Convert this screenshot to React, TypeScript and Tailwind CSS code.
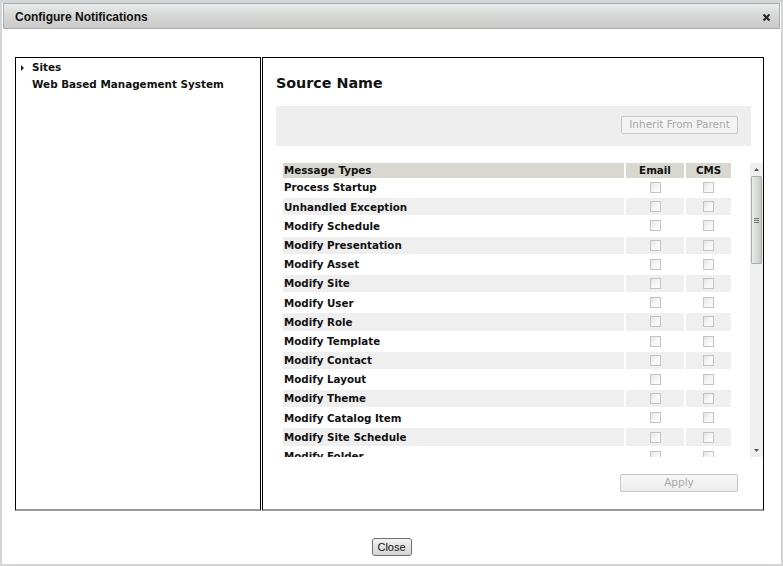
import React from "react";

const rows = [
  "Process Startup",
  "Unhandled Exception",
  "Modify Schedule",
  "Modify Presentation",
  "Modify Asset",
  "Modify Site",
  "Modify User",
  "Modify Role",
  "Modify Template",
  "Modify Contact",
  "Modify Layout",
  "Modify Theme",
  "Modify Catalog Item",
  "Modify Site Schedule",
  "Modify Folder",
];

function Check() {
  return (
    <div className="w-[11px] h-[11px] border border-[#c4c4c4] bg-gradient-to-br from-[#e4e4e4] via-[#f6f6f6] to-[#fbfbfb]" />
  );
}

export default function App() {
  return (
    <div
      className="w-[783px] h-[566px] bg-white border-l-2 border-r-2 border-t-[3px] border-b-2 border-[#d3d6d6] flex flex-col overflow-hidden"
      style={{ fontFamily: '"DejaVu Sans", Verdana, sans-serif' }}
    >
      {/* Title bar */}
      <div className="mx-px h-[26px] shrink-0 border border-[#acacac] bg-gradient-to-b from-[#e7ecea] via-[#d6d7d5] to-[#cacaca] flex items-center justify-between pl-[11px] pr-[8px] pt-[2px]">
        <span
          className="text-[12px] font-bold text-[#111]"
          style={{ fontFamily: '"Liberation Sans", Arial, sans-serif' }}
        >
          Configure Notifications
        </span>
        <svg width="9" height="9" viewBox="0 0 9 9">
          <path d="M1.5 1.5 L7.5 7.5 M7.5 1.5 L1.5 7.5" stroke="#2a2a2a" strokeWidth="2.2" />
        </svg>
      </div>

      {/* Panels */}
      <div className="mt-[28px] ml-[13px] flex gap-px">
        {/* Left panel */}
        <div className="w-[246px] h-[454px] border-t border-l border-r border-black border-b-2 border-b-[#9a9a92] pt-[1px] text-[10.4px] font-bold text-[#111]">
          <div className="flex items-center h-[17px]">
            <svg width="16" height="10" viewBox="0 0 16 10" className="shrink-0">
              <path d="M5 2 L8 5 L5 8 Z" fill="#222" />
            </svg>
            <span>Sites</span>
          </div>
          <div className="flex items-center h-[17px] pl-[16px]">
            <span>Web Based Management System</span>
          </div>
        </div>

        {/* Right panel */}
        <div className="w-[502px] h-[454px] border-t border-l border-r border-black border-b-2 border-b-[#9a9a92] flex flex-col">
          <div className="pl-[13px] pr-[12px] pt-[17px]">
            <div className="h-[18px] flex items-center text-[14.3px] font-bold text-[#111]">
              Source Name
            </div>
            <div className="mt-[13px] h-[40px] bg-[#eeeeee] flex justify-end items-start pt-[10px] pr-[13px]">
              <div className="w-[117px] h-[18px] border border-[#c6c6c6] rounded-[2px] bg-[#f3f3f3] flex items-center justify-center text-[10.5px] text-[#a8a8a8]">
                Inherit From Parent
              </div>
            </div>
          </div>

          {/* Table + scrollbar */}
          <div className="mt-[17px] ml-[18px] h-[294px] flex">
            <div className="flex-1 overflow-hidden">
              <div className="flex flex-col gap-y-[2px] pl-[2px] text-[10.3px] font-bold text-[#111]">
                <div className="grid grid-cols-[341px_58px_45px] gap-x-[2px] h-[14px]">
                  <div className="bg-[#d8d8d0] flex items-center pl-px">Message Types</div>
                  <div className="bg-[#d8d8d0] flex items-center justify-center">Email</div>
                  <div className="bg-[#d8d8d0] flex items-center justify-center">CMS</div>
                </div>
                {rows.map((r, i) => {
                  const bg = i % 2 === 1 ? "bg-[#efefef]" : "bg-white";
                  return (
                    <div key={r} className="grid grid-cols-[341px_58px_45px] gap-x-[2px] h-[17.2px] shrink-0">
                      <div className={`${bg} flex items-center pl-px pt-px`}>{r}</div>
                      <div className={`${bg} flex items-center justify-center`}>
                        <Check />
                      </div>
                      <div className={`${bg} flex items-center justify-center`}>
                        <Check />
                      </div>
                    </div>
                  );
                })}
              </div>
            </div>
            {/* Scrollbar */}
            <div className="w-[13px] h-full bg-[#efefef] flex flex-col items-center">
              <div className="h-[13px] w-full flex items-center justify-center">
                <svg width="7" height="5" viewBox="0 0 7 5">
                  <path d="M1 4 L3.5 1 L6 4 Z" fill="#555" />
                </svg>
              </div>
              <div className="w-[11px] h-[88px] border border-[#a9aeab] rounded-[1px] bg-gradient-to-r from-[#e9ecea] via-[#d8dcd8] to-[#c8ccc8] flex items-center justify-center">
                <div className="flex flex-col gap-[1px]">
                  <div className="w-[5px] h-px bg-[#777]" />
                  <div className="w-[5px] h-px bg-[#777]" />
                  <div className="w-[5px] h-px bg-[#777]" />
                </div>
              </div>
              <div className="flex-1" />
              <div className="h-[13px] w-full flex items-center justify-center">
                <svg width="7" height="5" viewBox="0 0 7 5">
                  <path d="M1 1 L3.5 4 L6 1 Z" fill="#555" />
                </svg>
              </div>
            </div>
          </div>

          <div className="flex justify-end pr-[25px] mt-[17px]">
            <div className="w-[118px] h-[18px] border border-[#c6c6c6] rounded-[2px] bg-gradient-to-b from-[#f7f7f7] to-[#ececec] flex items-center justify-center text-[10.5px] text-[#a8a8a8]">
              Apply
            </div>
          </div>
        </div>
      </div>

      {/* Close button */}
      <div className="flex justify-center mt-[27px]">
        <div
          className="w-[40px] h-[18px] border border-[#707070] rounded-[3px] bg-gradient-to-b from-[#f2f2f2] to-[#d4d4d4] flex items-center justify-center text-[11px] text-[#111]"
          style={{ fontFamily: '"Liberation Sans", Arial, sans-serif' }}
        >
          Close
        </div>
      </div>
    </div>
  );
}
